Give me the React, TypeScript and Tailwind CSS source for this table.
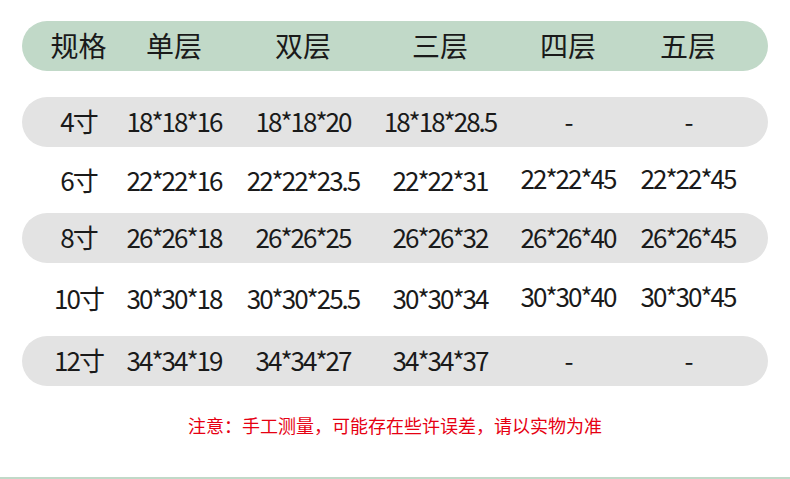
import React from "react";

const cols = "grid grid-cols-[113px_78px_180px_94px_162px_78px] items-center";

const headers = ["规格", "单层", "双层", "三层", "四层", "五层"];

const rows = [
  { size: "4寸", vals: ["18*18*16", "18*18*20", "18*18*28.5", "-", "-"], gray: true, mt: "mt-[26px]" },
  { size: "6寸", vals: ["22*22*16", "22*22*23.5", "22*22*31", "22*22*45", "22*22*45"], gray: false, mt: "mt-[9px]" },
  { size: "8寸", vals: ["26*26*18", "26*26*25", "26*26*32", "26*26*40", "26*26*45"], gray: true, mt: "mt-[7px]" },
  { size: "10寸", vals: ["30*30*18", "30*30*25.5", "30*30*34", "30*30*40", "30*30*45"], gray: false, mt: "mt-[11px]" },
  { size: "12寸", vals: ["34*34*19", "34*34*27", "34*34*37", "-", "-"], gray: true, mt: "mt-[12px]" },
];

const Cell = ({ children, lift }: { children: React.ReactNode; lift?: boolean }) => (
  <div className={`flex justify-center whitespace-nowrap ${lift ? "pb-[8px]" : "pb-[3px]"}`}>{children}</div>
);

export default function App() {
  return (
    <div
      className="w-[790px] h-[479px] bg-white flex flex-col pt-[21px] text-[#1a1a1a]"
      style={{ fontFamily: '"Noto Sans CJK SC", "Noto Sans", sans-serif' }}
    >
      {/* header */}
      <div className={`mx-[22px] h-[50px] rounded-full bg-[#c1d9c8] text-[28px] ${cols}`}>
        {headers.map((h) => (
          <Cell key={h}>{h}</Cell>
        ))}
      </div>

      {rows.map((r) => (
        <div
          key={r.size}
          className={`mx-[22px] h-[50px] rounded-full text-[26px] tracking-[-2px] ${r.gray ? "bg-[#e3e3e3]" : ""} ${r.mt} ${cols}`}
        >
          <Cell>{r.size}</Cell>
          {r.vals.map((v, i) => (
            <Cell key={i} lift={!r.gray && i >= 3}>
              {v}
            </Cell>
          ))}
        </div>
      ))}

      <div className="mt-[27px] text-center text-[18px] leading-[24px] text-[#e60012]">
        注意：手工测量，可能存在些许误差，请以实物为准
      </div>

      <div className="mt-auto h-[2px] bg-[#c1d9c8]" />
    </div>
  );
}
